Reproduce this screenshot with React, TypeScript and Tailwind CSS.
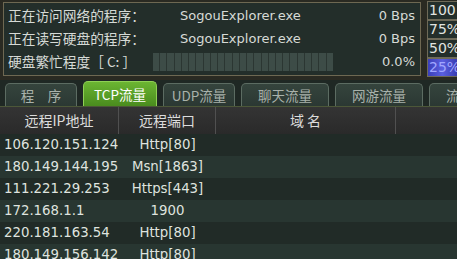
import React from "react";

const latin = "font-['DejaVu_Sans','Noto_Sans_CJK_SC',sans-serif]";
const cjk = "font-['Noto_Sans_CJK_SC','DejaVu_Sans',sans-serif]";

const rows: [string, string][] = [
  ["106.120.151.124", "Http[80]"],
  ["180.149.144.195", "Msn[1863]"],
  ["111.221.29.253", "Https[443]"],
  ["172.168.1.1", "1900"],
  ["220.181.163.54", "Http[80]"],
  ["180.149.156.142", "Http[80]"],
];

const tabs = [
  { label: "程　序", w: "w-[72px]" },
  { label: "TCP流量", w: "w-[74px]", active: true },
  { label: "UDP流量", w: "w-[72px]" },
  { label: "聊天流量", w: "w-[88px]" },
  { label: "网游流量", w: "w-[88px]" },
  { label: "流量统计", w: "w-[88px]" },
];

export default function App() {
  return (
    <div className="w-[457px] h-[259px] overflow-hidden bg-[#222c28] flex flex-col text-[#d6dad6]">
      {/* top section */}
      <div className="h-[80px] shrink-0 bg-[#2a2a22] flex pt-[2px] pl-[3px]">
        <div className="w-[424px] h-[74px] border border-[#6e6852] bg-[#232e2a] flex flex-col pl-[4px] pr-[5px] pt-[4px] gap-[5px]">
          <div className="flex items-center h-[18px]">
            <span className={`${cjk} text-[13.7px] w-[172px] leading-none`}>正在访问网络的程序：</span>
            <span className={`${latin} text-[13px] flex-1`}>SogouExplorer.exe</span>
            <span className={`${latin} text-[13px]`}>0 Bps</span>
          </div>
          <div className="flex items-center h-[18px]">
            <span className={`${cjk} text-[13.7px] w-[172px] leading-none`}>正在读写硬盘的程序：</span>
            <span className={`${latin} text-[13px] flex-1`}>SogouExplorer.exe</span>
            <span className={`${latin} text-[13px]`}>0 Bps</span>
          </div>
          <div className="flex items-center h-[18px]">
            <span className={`${cjk} text-[13.7px] w-[145px] leading-none whitespace-nowrap`}>硬盘繁忙程度［ C: ］</span>
            <div className="w-[180px] h-[18px] flex gap-px bg-[#2b3632]">
              {Array.from({ length: 25 }).map((_, i) => (
                <div key={i} className="flex-1 bg-[#3d4c47]" />
              ))}
            </div>
            <span className={`${latin} text-[13px] flex-1 text-right`}>0.0%</span>
          </div>
        </div>
        <div className="ml-[6px] mt-[-1px] flex flex-col w-[30px]">
          {["100", "75%", "50%", "25%"].map((t, i) => (
            <div
              key={t}
              className={`h-[19px] border border-[#6e6a58] border-r-0 pl-[1px] ${latin} text-[14px] leading-[17px] overflow-hidden whitespace-nowrap ${
                i === 3 ? "bg-gradient-to-r from-[#3b3fb8] via-[#5a5ee0] to-[#3a3db0] text-[#a0a6ff]" : "bg-[#232e2a] text-[#e0e4e0]"
              }`}
            >
              {t}
            </div>
          ))}
        </div>
      </div>

      {/* tabs */}
      <div className="h-[27px] shrink-0 bg-[#1f2824] flex items-end gap-[6px] pl-[5px] border-b border-[#4c5738]">
        {tabs.map((t) => (
          <div
            key={t.label}
            className={`${t.w} shrink-0 rounded-t-[5px] border border-b-0 flex items-center justify-center ${cjk} text-[13.5px] whitespace-nowrap ${
              t.active
                ? "h-[25px] bg-gradient-to-b from-[#6bb532] to-[#4a8c1e] border-[#8fd055] text-white"
                : "h-[23px] bg-gradient-to-b from-[#35443d] to-[#2b3833] border-[#5c6c62] text-[#a9b2ab]"
            }`}
          >
            {t.label}
          </div>
        ))}
      </div>

      {/* header */}
      <div className={`h-[27px] shrink-0 bg-gradient-to-b from-[#343434] to-[#2a2a2a] grid grid-cols-[119px_97px_180px_1fr] ${cjk} text-[14px] text-[#dcdcdc]`}>
        <div className="flex items-center justify-center border-r border-[#505050]">远程IP地址</div>
        <div className="flex items-center justify-center border-r border-[#505050]">远程端口</div>
        <div className="flex items-center justify-center border-r border-[#505050]">域&nbsp;名</div>
        <div />
      </div>

      {/* rows */}
      <div className="flex flex-col">
        {rows.map(([ip, port], i) => (
          <div
            key={i}
            className={`h-[22px] shrink-0 grid grid-cols-[119px_97px_180px_1fr] items-center ${latin} text-[13.3px] text-[#dfe3df] ${
              i % 2 === 0 ? "bg-[#212b27]" : "bg-[#283631]"
            }`}
          >
            <div className="pl-[4px] whitespace-nowrap">{ip}</div>
            <div className="text-center whitespace-nowrap">{port}</div>
            <div />
            <div />
          </div>
        ))}
      </div>
    </div>
  );
}
